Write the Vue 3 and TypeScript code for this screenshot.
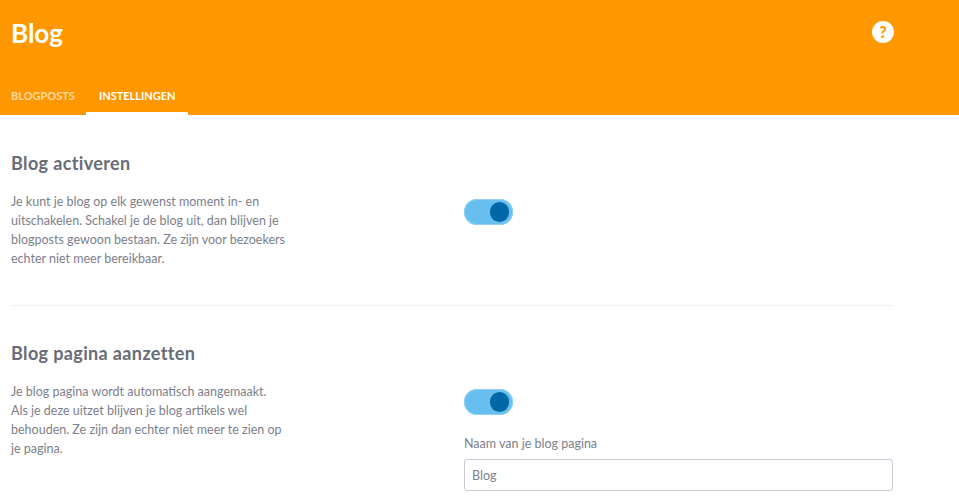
<script setup lang="ts">
const tabs = [
  { label: 'Blogposts', active: false },
  { label: 'Instellingen', active: true },
]
</script>

<template>
  <div class="page">
    <header class="header">
      <div class="top">
        <h1 class="title">Blog</h1>
        <span class="help">?</span>
      </div>
      <nav class="tabs">
        <a v-for="t in tabs" :key="t.label" class="tab" :class="{ active: t.active }">{{ t.label }}</a>
      </nav>
    </header>
    <main class="content">
      <section class="row first">
        <div class="info">
          <h2>Blog activeren</h2>
          <p>Je kunt je blog op elk gewenst moment in- en uitschakelen. Schakel je de blog uit, dan blijven je blogposts gewoon bestaan. Ze zijn voor bezoekers echter niet meer bereikbaar.</p>
        </div>
        <div class="control">
          <span class="switch"><span class="knob"></span></span>
        </div>
      </section>
      <section class="row second">
        <div class="info">
          <h2>Blog pagina aanzetten</h2>
          <p>Je blog pagina wordt automatisch aangemaakt. Als je deze uitzet blijven je blog artikels wel behouden. Ze zijn dan echter niet meer te zien op je pagina.</p>
        </div>
        <div class="control">
          <span class="switch"><span class="knob"></span></span>
          <label class="label" for="naam">Naam van je blog pagina</label>
          <input id="naam" class="input" value="Blog" />
        </div>
      </section>
    </main>
  </div>
</template>

<style scoped>
.page {
  width: 959px;
  height: 498px;
  overflow: hidden;
  background: #fff;
  font-family: Lato, "Open Sans", sans-serif;
  color: #6f7280;
}
.header {
  height: 115px;
  background: #ff9800;
  display: flex;
  flex-direction: column;
  justify-content: space-between;
}
.top {
  display: flex;
  justify-content: space-between;
  align-items: center;
  padding: 17px 65px 0 11px;
}
.title {
  margin: 0;
  font-size: 26px;
  line-height: 32px;
  font-weight: 700;
  color: #fff;
}
.help {
  width: 22px;
  height: 22px;
  border-radius: 50%;
  background: #fff;
  color: #ff9800;
  font-size: 16px;
  font-weight: 900;
  line-height: 22px;
  text-align: center;
  margin-top: -2px;
}
.tabs {
  display: flex;
}
.tab {
  height: 36px;
  line-height: 34px;
  box-sizing: border-box;
  padding: 0 12.5px;
  font-size: 11px;
  font-weight: 700;
  text-transform: uppercase;
  color: #ffd9a0;
}
.tab:first-child {
  margin-left: -1.5px;
  padding-right: 11.5px;
}
.tab.active {
  color: #fff;
  border-bottom: 3px solid #fff;
}
.content {
  width: 882px;
  margin-left: 11px;
}
.row {
  display: flex;
}
.first {
  height: 191px;
  padding-top: 37px;
  box-sizing: border-box;
  border-bottom: 1px solid #f0f0f2;
}
.second {
  padding-top: 36px;
}
.info {
  width: 453px;
  flex: none;
}
h2 {
  margin: 0;
  font-size: 18px;
  line-height: 22px;
  font-weight: 700;
  letter-spacing: 0.37px;
  color: #686b78;
}
p {
  margin: 18px 0 0;
  width: 282px;
  font-size: 12.5px;
  line-height: 19px;
  color: #7d808c;
}
.second p {
  width: 273px;
}
.control {
  flex: 1;
  display: flex;
  flex-direction: column;
  padding-top: 47px;
}
.switch {
  position: relative;
  display: block;
  width: 49px;
  height: 26px;
  border-radius: 13px;
  background: #66bfee;
  box-shadow: inset 0 0 0 1px #93d0f2;
}
.knob {
  position: absolute;
  right: 4px;
  top: 3px;
  width: 19.5px;
  height: 19.5px;
  border-radius: 50%;
  background: #0068a5;
}
.label {
  margin-top: 20px;
  font-size: 12.5px;
  line-height: 18px;
  color: #7d808c;
}
.input {
  margin-top: 6px;
  box-sizing: border-box;
  width: 429px;
  height: 32px;
  padding: 0 7px;
  border: 1px solid #c9cbd6;
  border-radius: 3px;
  font-family: inherit;
  font-size: 12.5px;
  color: #7d808c;
  outline: none;
}
</style>
